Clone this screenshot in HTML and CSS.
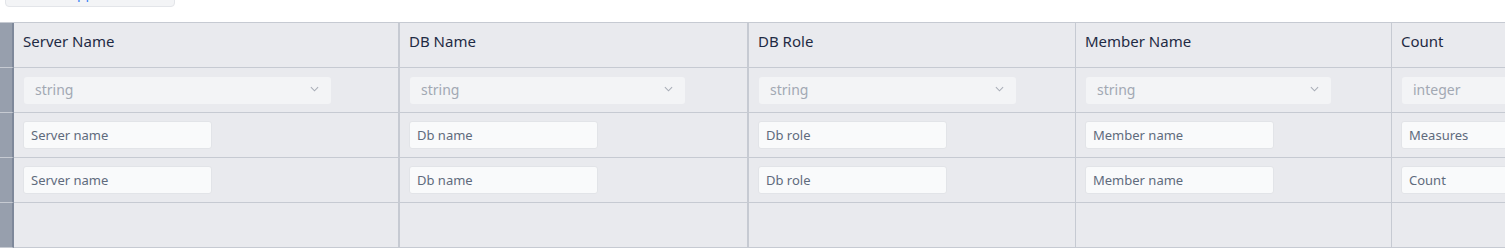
FILE: index.html
```html
<!DOCTYPE html>
<html lang="en">
<head>
    <meta charset="UTF-8">
    <meta name="viewport" content="width=device-width, initial-scale=1.0">
    <title>Role members</title>
    <link rel="stylesheet" href="styles.css">
</head>
<body>
    <div class="toolbar">
        <button class="add-btn">Add Application</button>
    </div>

    <div class="grid">
        <!-- header row -->
        <div class="gutter"></div>
        <div class="cell head c1">Server Name</div>
        <div class="cell head c2">DB Name</div>
        <div class="cell head c3">DB Role</div>
        <div class="cell head c4">Member Name</div>
        <div class="cell head c5">Count</div>

        <!-- type row -->
        <div class="gutter"></div>
        <div class="cell c1"><div class="type-select w1"><span>string</span><svg viewBox="0 0 10 6"><path d="M1 1l4 4 4-4"/></svg></div></div>
        <div class="cell c2"><div class="type-select w2"><span>string</span><svg viewBox="0 0 10 6"><path d="M1 1l4 4 4-4"/></svg></div></div>
        <div class="cell c3"><div class="type-select w3"><span>string</span><svg viewBox="0 0 10 6"><path d="M1 1l4 4 4-4"/></svg></div></div>
        <div class="cell c4"><div class="type-select w4"><span>string</span><svg viewBox="0 0 10 6"><path d="M1 1l4 4 4-4"/></svg></div></div>
        <div class="cell c5"><div class="type-select w4"><span>integer</span><svg viewBox="0 0 10 6"><path d="M1 1l4 4 4-4"/></svg></div></div>

        <!-- value rows -->
        <div class="gutter"></div>
        <div class="cell c1"><input class="field" value="Server name"></div>
        <div class="cell c2"><input class="field" value="Db name"></div>
        <div class="cell c3"><input class="field" value="Db role"></div>
        <div class="cell c4"><input class="field" value="Member name"></div>
        <div class="cell c5"><input class="field" value="Measures"></div>

        <div class="gutter"></div>
        <div class="cell c1"><input class="field" value="Server name"></div>
        <div class="cell c2"><input class="field" value="Db name"></div>
        <div class="cell c3"><input class="field" value="Db role"></div>
        <div class="cell c4"><input class="field" value="Member name"></div>
        <div class="cell c5"><input class="field" value="Count"></div>

        <!-- empty row -->
        <div class="gutter"></div>
        <div class="cell c1"></div>
        <div class="cell c2"></div>
        <div class="cell c3"></div>
        <div class="cell c4"></div>
        <div class="cell c5"></div>
    </div>
</body>
</html>
```

FILE: styles.css
```css
body {
    margin: 0;
    overflow: hidden;
    background: #fff;
    font-family: 'Noto Sans', 'Open Sans', sans-serif;
    color: #1f2a44;
}

.toolbar {
    display: flex;
    align-items: flex-start;
    height: 22px;
    padding-left: 5px;
}

.add-btn {
    margin-top: -23px;
    width: 170px;
    height: 30px;
    background: #f3f4f6;
    border: 1px solid #e3e5e9;
    border-radius: 4px;
    color: #3b82f6;
    font-family: inherit;
    font-size: 14px;
    padding: 0;
}

.grid {
    display: grid;
    grid-template-columns: 14px 386px 349px 327px 316px 220px;
    grid-auto-rows: 45px;
    border-top: 1px solid #c6cad2;
    width: max-content;
}

.gutter {
    background: #979fad;
    border-right: 2px solid #7e889a;
    border-bottom: 1px solid #c6cad2;
}

.cell {
    display: flex;
    align-items: center;
    padding: 0 9px;
    background: #e9eaee;
    border-right: 1px solid #c6cad2;
    border-bottom: 1px solid #c6cad2;
}

.c1, .c2 {
    border-right-width: 2px;
}

.head {
    font-size: 15px;
    padding-bottom: 9px;
}

.type-select {
    display: flex;
    align-items: center;
    justify-content: space-between;
    height: 27px;
    margin-left: 1px;
    padding: 0 12px 2px 11px;
    background: #f3f4f6;
    border-radius: 3px;
    color: #a2a8b3;
    font-size: 14px;
    box-sizing: border-box;
}

.type-select svg {
    width: 9px;
    height: 6px;
    fill: none;
    stroke: #a9aeb8;
    stroke-width: 1.2;
}

.w1 { width: 307px; }
.w2 { width: 275px; }
.w3 { width: 257px; }
.w4 { width: 245px; }

.field {
    width: 189px;
    height: 28px;
    box-sizing: border-box;
    padding: 0 7px;
    background: #f9fafb;
    border: 1px solid #e2e4e8;
    border-radius: 3px;
    font-family: inherit;
    font-size: 13px;
    color: #5f6b7d;
}
```
